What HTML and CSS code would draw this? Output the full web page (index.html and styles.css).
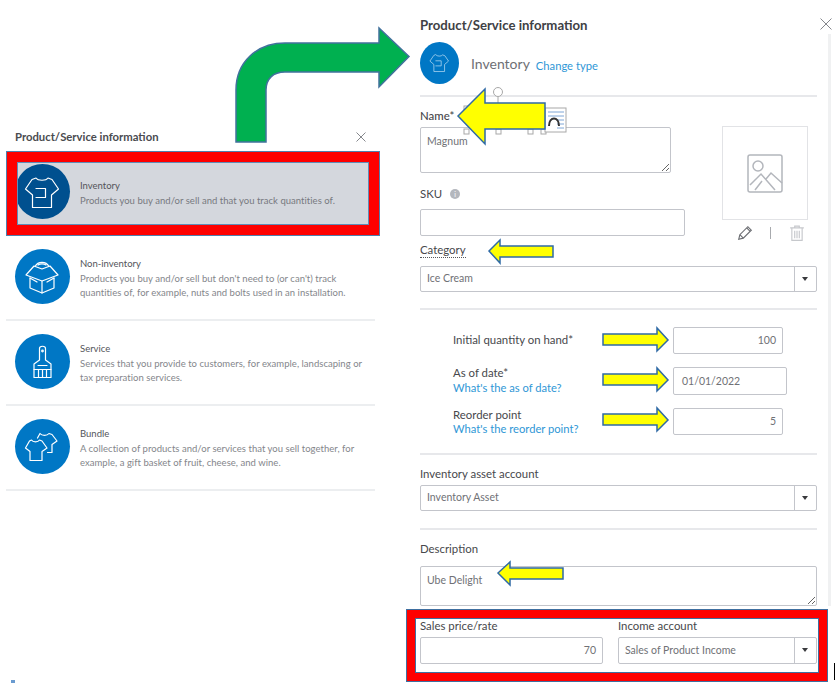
FILE: index.html
```html
<!DOCTYPE html>
<html lang="en">
<head>
<meta charset="utf-8">
<title>Product/Service information</title>
<link rel="stylesheet" href="styles.css">
</head>
<body>
<svg class="defs" width="0" height="0" aria-hidden="true">
  <symbol id="i-shirt" viewBox="0 0 55 55">
    <path d="M21 14C23 17 31 17 33 14L37 15.500L43.500 25L36.500 31V43.500H17.500V31L10.500 25L17 15.500Z"/>
    <path d="M21 24.500H30.500V33.500H21"/>
  </symbol>
  <symbol id="i-box" viewBox="0 0 55 55">
    <path d="M15 29V39L27 44L39 39V29"/>
    <path d="M27 32V44"/>
    <path d="M27 32L11 26L19 17L27 20L35 17L43 26Z"/>
    <path d="M20 17.500C23 12 31 12 34 17.500"/>
    <path d="M23 16C25 14.500 29 14.500 31 16"/>
    <path d="M15 29L22 33M39 29L32 33"/>
  </symbol>
  <symbol id="i-brush" viewBox="0 0 55 55">
    <path d="M24.500 26V14.500C24.500 11.500 30.500 11.500 30.500 14.500V26L36 30V43.500H19V30Z"/>
    <path d="M23 31.500H32M19 35.500H36M23.500 35.500V43.500M27.500 35.500V43.500M31.500 35.500V43.500"/>
    <circle cx="27.500" cy="17" r=".8"/>
  </symbol>
  <symbol id="i-bundle" viewBox="0 0 55 55">
    <path d="M16.500 21C18 23.500 23 23.500 24.500 21L27 22L32 29L27 32.500V41.500H15V32.500L10.500 29L14.500 22Z"/>
    <path d="M22.500 19L25 14.500C27 17 32 17 34 14.500L37 15.500L42 22L37 25.500V33.500H32.500"/>
  </symbol>
</svg>

<main class="page">
  <section class="type-panel">
    <header class="type-head">
      <h2 class="type-title">Product/Service information</h2>
      <svg class="close close-small" viewBox="0 0 10 10"><path d="M.5 .5L9.500 9.500M9.500 .5L.5 9.500"/></svg>
    </header>
    <ul class="type-list">
      <li class="type-row type-row-selected">
        <span class="badge badge-dark"><svg class="badge-icon"><use href="#i-shirt"/></svg></span>
        <div class="type-copy">
          <div class="type-name">Inventory</div>
          <div class="type-desc">Products you buy and/or sell and that you track quantities of.</div>
        </div>
      </li>
      <li class="type-row">
        <span class="badge"><svg class="badge-icon"><use href="#i-box"/></svg></span>
        <div class="type-copy">
          <div class="type-name">Non-inventory</div>
          <div class="type-desc">Products you buy and/or sell but don't need to (or can't) track<br>quantities of, for example, nuts and bolts used in an installation.</div>
        </div>
      </li>
      <li class="type-row">
        <span class="badge"><svg class="badge-icon"><use href="#i-brush"/></svg></span>
        <div class="type-copy">
          <div class="type-name">Service</div>
          <div class="type-desc">Services that you provide to customers, for example, landscaping or<br>tax preparation services.</div>
        </div>
      </li>
      <li class="type-row">
        <span class="badge"><svg class="badge-icon"><use href="#i-bundle"/></svg></span>
        <div class="type-copy">
          <div class="type-name">Bundle</div>
          <div class="type-desc">A collection of products and/or services that you sell together, for<br>example, a gift basket of fruit, cheese, and wine.</div>
        </div>
      </li>
    </ul>
  </section>

  <section class="form-panel">
    <h1 class="form-title">Product/Service information</h1>
    <div class="form-type">
      <span class="form-badge"><svg class="form-badge-icon"><use href="#i-shirt"/></svg></span>
      <span class="form-type-name">Inventory</span>
      <a class="link form-type-link">Change type</a>
    </div>
    <hr class="rule rule-top">

    <div class="identity">
      <div class="identity-fields">
        <label class="label label-name">Name*</label>
        <textarea class="area area-name" readonly>Magnum</textarea>
        <div class="label label-sku">SKU <span class="info">i</span></div>
        <div class="field field-sku"></div>
      </div>
      <div class="picture">
        <div class="picture-box">
          <svg class="picture-icon" viewBox="0 0 36 39">
            <rect x="1" y="1" width="34" height="37" rx="2"/>
            <circle cx="11" cy="12" r="5"/>
            <path d="M3 31L14 20L28 36M19 25L24 19L35 29M8 36L15 27"/>
          </svg>
        </div>
        <div class="picture-actions">
          <svg class="tool" viewBox="0 0 14 14"><path d="M1.500 12.500L2.500 8.500L9.500 1.500L12.500 4.500L5.500 11.500ZM2.500 8.500L5.500 11.500M8.500 2.500L11.500 5.500"/></svg>
          <span class="tool-sep"></span>
          <svg class="tool tool-faint" viewBox="0 0 14 14"><path d="M1 2.500H13M5 2.500V1H9V2.500M2.500 2.500V13.500H11.500V2.500M5 5V11.500M7 5V11.500M9 5V11.500"/></svg>
        </div>
      </div>
    </div>

    <div class="label label-category"><span class="dotted">Category</span></div>
    <div class="select"><span class="select-text">Ice Cream</span><span class="select-btn"></span></div>
    <hr class="rule rule-category">

    <div class="qty">
      <div class="qty-row qty-row-first">
        <div class="label qty-label-single">Initial quantity on hand*</div>
        <div class="field field-num field-qty">100</div>
      </div>
      <div class="qty-row qty-row-date">
        <div class="qty-label"><div class="label">As of date*</div><a class="link">What's the as of date?</a></div>
        <div class="field field-date">01/01/2022</div>
      </div>
      <div class="qty-row qty-row-reorder">
        <div class="qty-label"><div class="label">Reorder point</div><a class="link">What's the reorder point?</a></div>
        <div class="field field-num field-reorder">5</div>
      </div>
    </div>
    <hr class="rule rule-qty">

    <div class="label label-asset">Inventory asset account</div>
    <div class="select"><span class="select-text">Inventory Asset</span><span class="select-btn"></span></div>
    <hr class="rule rule-asset">

    <div class="label label-desc">Description</div>
    <textarea class="area area-desc" readonly>Ube Delight</textarea>

    <div class="sales">
      <div class="sales-col sales-price">
        <div class="label">Sales price/rate</div>
        <div class="field field-num field-sales">70</div>
      </div>
      <div class="sales-col sales-income">
        <div class="label">Income account</div>
        <div class="select select-sales"><span class="select-text">Sales of Product Income</span><span class="select-btn"></span></div>
      </div>
    </div>
  </section>

  <svg class="close close-large" viewBox="0 0 12 12"><path d="M.5 .5L11.500 11.500M11.500 .5L.5 11.500"/></svg>
  <span class="scroll-track"></span>
  <span class="edge-mark"></span>
  <span class="corner-mark"></span>
  <span class="callout-sales"></span>

  <svg class="annotations" viewBox="0 0 837 688" width="837" height="688" aria-hidden="true">
    <g class="handles">
      <circle cx="498" cy="92" r="4.500"/>
      <path d="M498 97V107"/>
      <rect x="464" y="106" width="5" height="5"/>
      <rect x="464" y="129" width="5" height="5"/>
      <rect x="496" y="129" width="5" height="5"/>
      <rect x="528" y="129" width="5" height="5"/>
      <rect x="541" y="129" width="5" height="5"/>
      <rect x="545" y="108" width="21" height="24"/>
    </g>
    <path class="wrap-lines" d="M548 112H564M548 116H564M557 120H564M557 124H564M557 128H564"/>
    <path class="wrap-arc" d="M549 126C549 116 559 116 559 126"/>
    <path class="arrow-green" d="M236 142V90C236 62 257 43 285 43H379V28L409 56.500L379 87V72H285C273 72 266 79 266 90V142Z"/>
    <path class="arrow-yellow" d="M458 116L485 89V103H545V129H485V144Z"/>
    <path class="arrow-yellow" d="M489 251L500 240V246H553V257H500V263Z"/>
    <path class="arrow-yellow" d="M603 334H657V328L668 340L657 351V345H603Z"/>
    <path class="arrow-yellow" d="M603 374H657V368L668 380L657 391V385H603Z"/>
    <path class="arrow-yellow" d="M603 414H657V408L668 420L657 431V425H603Z"/>
    <path class="arrow-yellow" d="M498 573L510 562V568H563V579H510V585Z"/>
  </svg>
</main>
</body>
</html>
```
FILE: styles.css
```css
*, *::before, *::after { box-sizing: border-box; }
html, body { margin: 0; padding: 0; }
body {
  width: 837px;
  height: 688px;
  overflow: hidden;
  background: #fff;
  font-family: Lato, "Open Sans", sans-serif;
  color: #47484c;
}
.defs { position: absolute; }
.page {
  position: relative;
  display: flex;
  width: 837px;
  height: 688px;
  padding-left: 6px;
}

/* Left: type chooser */
.type-panel { width: 369px; padding-top: 129px; }
.type-head {
  display: flex;
  justify-content: space-between;
  align-items: center;
  height: 16px;
  padding-left: 9px;
  margin-bottom: 6px;
}
.type-title { margin: 0; font-size: 11.300px; line-height: 16px; font-weight: 700; color: #4a4b4f; }
.type-list { list-style: none; margin: 0; padding: 0; }
.type-row {
  position: relative;
  display: flex;
  align-items: center;
  height: 85px;
  padding-left: 9px;
  padding-bottom: 2px;
  border-bottom: 2px solid #eceef0;
}
.type-row-selected { border-bottom: 0; padding-bottom: 4px; }
.type-row-selected::before {
  content: "";
  position: absolute;
  left: 0;
  top: 0;
  width: 374px;
  height: 85px;
  background: #d4d7dd;
}
.type-row-selected::after {
  content: "";
  position: absolute;
  left: 0;
  top: 0;
  width: 374px;
  height: 85px;
  border: 11px solid #fe0000;
  outline: 1px solid #4f7fae;
  outline-offset: -1px;
  box-shadow: inset 0 0 0 1px #5f8db8;
}
.badge {
  position: relative;
  flex: none;
  width: 55px;
  height: 55px;
  border-radius: 50%;
  background: #0077c5;
}
.badge-dark { background: #00508f; }
.badge-icon {
  display: block;
  width: 55px;
  height: 55px;
  fill: none;
  stroke: #fff;
  stroke-width: 1.200;
  stroke-linejoin: round;
  stroke-linecap: round;
}
.type-copy { position: relative; margin-left: 10px; padding-top: 4px; }
.type-name { font-size: 9.500px; line-height: 14px; color: #54555a; }
.type-desc { font-size: 9.500px; line-height: 14px; letter-spacing: .03px; color: #84868b; white-space: nowrap; margin-top: 1px; }
.type-row-selected .type-desc { color: #77797f; }

/* Right: form */
.form-panel { width: 397px; margin-left: 45px; flex: none; }
.form-title { margin: 17px 0 0; font-size: 13.200px; line-height: 16px; font-weight: 700; color: #404145; }
.form-type { display: flex; align-items: center; height: 43px; margin-top: 8px; }
.form-badge {
  display: flex;
  align-items: center;
  justify-content: center;
  flex: none;
  width: 39px;
  height: 42px;
  border-radius: 50%;
  background: #0077c5;
}
.form-badge-icon {
  display: block;
  width: 31px;
  height: 33px;
  fill: none;
  stroke: #b9dcf2;
  stroke-width: 1.300;
  stroke-linejoin: round;
  stroke-linecap: round;
}
.form-type-name { margin: 2px 0 0 12px; font-size: 14px; color: #6f7075; }
.form-type-link { margin: 5px 0 0 6px; font-size: 9.700px; }
.link { display: block; font-size: 11.200px; line-height: 15px; color: #2f97d6; }
.rule { display: block; height: 2px; margin: 0; border: 0; background: #e7e8eb; }
.rule-top { margin-top: 11px; }

.label { font-size: 11.400px; line-height: 14px; color: #47484c; }
.identity { display: flex; height: 140px; }
.identity-fields { width: 265px; flex: none; }
.label-name { display: block; margin-top: 12px; font-weight: 500; }
.area {
  display: block;
  margin: 0;
  padding: 6px 6px;
  border: 1px solid #c3c5cb;
  border-radius: 2px;
  font-family: inherit;
  font-size: 10.500px;
  line-height: 14px;
  color: #707176;
  background: #fff;
  outline: 0;
}
.area-name { width: 251px; height: 46px; margin-top: 4px; }
.label-sku { display: flex; align-items: center; margin-top: 14px; }
.info {
  width: 10px;
  height: 10px;
  margin-left: 8px;
  border-radius: 50%;
  background: #b4b7bd;
  color: #fff;
  font-size: 7px;
  line-height: 10px;
  text-align: center;
}
.field {
  height: 27px;
  border: 1px solid #c3c5cb;
  border-radius: 2px;
  padding: 0 6px;
  font-size: 10.500px;
  line-height: 25px;
  color: #707176;
  background: #fff;
}
.field-sku { margin-top: 8px; }
.field-num { text-align: right; }

.picture { margin-left: 37px; margin-top: 29px; width: 86px; }
.picture-box {
  display: flex;
  align-items: center;
  justify-content: center;
  width: 86px;
  height: 94px;
  border: 1px solid #e2e3e6;
}
.picture-icon { width: 36px; height: 39px; fill: none; stroke: #b3b6bc; stroke-width: 1.500; }
.picture-actions { display: flex; align-items: center; height: 24px; margin-top: 1px; padding-left: 15px; }
.tool { width: 16px; height: 16px; fill: none; stroke: #6a6c71; stroke-width: 1; flex: none; }
.tool-faint { stroke: #c6c8cc; }
.tool-sep { width: 1px; height: 12px; margin: 0 18px 0 17px; background: #a8aaae; flex: none; }

.label-category { height: 23px; margin-top: 6px; }
.dotted { display: inline-block; height: 15px; border-bottom: 1px dotted #55565a; }
.select {
  display: flex;
  height: 26px;
  border: 1px solid #c3c5cb;
  border-radius: 2px;
  font-size: 10.500px;
  line-height: 23px;
  color: #707176;
}
.select-text { flex: 1; padding-left: 6px; }
.select-btn {
  position: relative;
  flex: none;
  width: 22px;
  border-left: 1px solid #c3c5cb;
}
.select-btn::after {
  content: "";
  position: absolute;
  left: 7px;
  top: 10px;
  border-style: solid;
  border-width: 4px 3.500px 0;
  border-color: #393a3d transparent transparent;
}
.rule-category { margin-top: 16px; }

.qty { padding-left: 33px; margin-top: 17px; }
.qty-row { display: flex; align-items: flex-start; }
.qty-label, .qty-label-single { width: 220px; flex: none; }
.qty-label-single { line-height: 26px; }
.qty-label .label, .qty-label .link { line-height: 15px; }
.qty-row-date { margin-top: 12px; height: 30px; }
.qty-row-date .qty-label { margin-top: -1px; }
.qty-row-reorder { margin-top: 11px; height: 30px; }
.qty-row-reorder .link { margin-top: -1px; }
.field-qty { width: 110px; height: 27px; }
.field-date { width: 114px; height: 28px; margin-top: 1px; line-height: 26px; padding-left: 8px; }
.field-reorder { width: 110px; height: 27px; margin-top: 1px; }
.rule-qty { margin-top: 16px; }

.label-asset { margin-top: 12px; height: 18px; }
.rule-asset { margin-top: 17px; }
.label-desc { margin-top: 12px; }
.area-desc { width: 397px; height: 40px; margin-top: 10px; }
.sales { display: flex; margin-top: 13px; }
.sales-col .label { margin-bottom: 4px; }
.sales-price { width: 183px; }
.sales-income { width: 199px; margin-left: 15px; }
.select-sales { height: 27px; line-height: 25px; }

/* Overlays */
.close { fill: none; stroke: #85878c; stroke-width: 1; flex: none; }
.close-small { width: 10px; height: 10px; margin-right: 9px; }
.close-large { position: absolute; left: 820px; top: 18px; width: 12px; height: 12px; }
.scroll-track { position: absolute; left: 828px; top: 34px; width: 3px; height: 572px; background: #f0f1f2; }
.edge-mark { position: absolute; left: 834px; top: 663px; width: 1px; height: 17px; background: #000; }
.corner-mark { position: absolute; left: 11px; top: 680px; width: 4px; height: 3px; background: #6a9bd0; }
.callout-sales {
  position: absolute;
  left: 406px;
  top: 609px;
  width: 422px;
  height: 73px;
  border: 9px solid #fe0000;
  outline: 1px solid #3f6fa0;
  outline-offset: -1px;
  box-shadow: inset 0 0 0 1px #3f6fa0;
}
.annotations { position: absolute; left: 0; top: 0; pointer-events: none; }
.handles { fill: #fff; stroke: #a8a8a8; stroke-width: 1; }
.wrap-lines { fill: none; stroke: #7fa6d6; stroke-width: 1; }
.wrap-arc { fill: none; stroke: #333; stroke-width: 2; }
.arrow-green { fill: #00b050; stroke: #41719c; stroke-width: 1.500; }
.arrow-yellow { fill: #ffff00; stroke: #2f6aa5; stroke-width: 1.500; }
```
